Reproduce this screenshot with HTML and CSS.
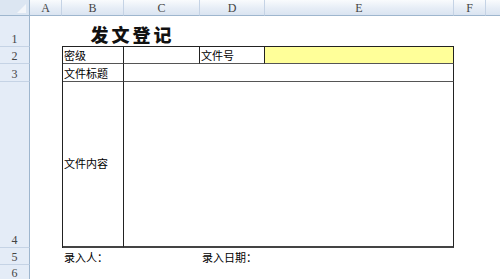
FILE: index.html
```html
<!DOCTYPE html>
<html>
<head>
<meta charset="utf-8">
<link rel="stylesheet" href="styles.css">
</head>
<body>
<div class="sheet">
  <div class="corner"><span class="tri"></span></div>
  <div class="ch cA">A</div>
  <div class="ch cB">B</div>
  <div class="ch cC">C</div>
  <div class="ch cD">D</div>
  <div class="ch cE">E</div>
  <div class="ch cF">F</div>
  <div class="ch cG"></div>

  <div class="rh r1">1</div>
  <div class="rh r2">2</div>
  <div class="rh r3">3</div>
  <div class="rh r4">4</div>
  <div class="rh r5">5</div>
  <div class="rh r6">6</div>

  <div class="title">发文登记</div>

  <div class="form">
    <div class="cell">密级</div>
    <div class="cell"></div>
    <div class="cell">文件号</div>
    <div class="cell yellow"></div>
    <div class="cell">文件标题</div>
    <div class="cell span3"></div>
    <div class="cell mid">文件内容</div>
    <div class="cell span3"></div>
  </div>

  <div class="foot f1">录入人：</div>
  <div class="foot f2">录入日期：</div>
</div>
</body>
</html>
```

FILE: styles.css
```css
html, body {
  margin: 0;
  padding: 0;
  background: #ffffff;
  overflow: hidden;
}

.sheet {
  width: 500px;
  height: 279px;
  display: grid;
  grid-template-columns: 30px 32px 62px 76px 65px 189px 32px 1fr;
  grid-template-rows: 16px 31px 17px 18px 166px 17px 17px 1fr;
  font-family: "Noto Sans CJK SC", sans-serif;
  background: #ffffff;
}

.corner {
  grid-row: 1;
  grid-column: 1;
  background: #dce6f2;
  border-right: 1px solid #9eb6ce;
  border-bottom: 1px solid #9eb6ce;
  position: relative;
}

.tri {
  position: absolute;
  right: 3px;
  bottom: 2px;
  width: 0;
  height: 0;
  border-left: 9px solid transparent;
  border-bottom: 9px solid #f3f6fa;
}

.ch {
  grid-row: 1;
  background: linear-gradient(#f9fbfd, #e6edf6 55%, #dae4f1);
  border-right: 1px solid #c5d3e5;
  border-bottom: 1px solid #9eb6ce;
  font-family: "Liberation Serif", serif;
  font-size: 12px;
  color: #444444;
  display: flex;
  justify-content: center;
  align-items: flex-end;
  line-height: 14px;
}

.cA { grid-column: 2; }
.cB { grid-column: 3; }
.cC { grid-column: 4; }
.cD { grid-column: 5; }
.cE { grid-column: 6; }
.cF { grid-column: 7; }
.cG { grid-column: 8; border-right: none; }

.rh {
  grid-column: 1;
  background: #e4ecf7;
  border-right: 1px solid #9eb6ce;
  border-bottom: 1px solid #c5d3e5;
  font-family: "Liberation Serif", serif;
  font-size: 12px;
  color: #444444;
  display: flex;
  justify-content: center;
  align-items: flex-end;
  line-height: 14px;
}

.r1 { grid-row: 2; }
.r2 { grid-row: 3; }
.r3 { grid-row: 4; }
.r4 { grid-row: 5; }
.r5 { grid-row: 6; }
.r6 { grid-row: 7 / 9; align-items: flex-start; padding-top: 1px; border-bottom: none; }

.title {
  grid-row: 2;
  grid-column: 3 / 5;
  display: flex;
  justify-content: center;
  align-items: flex-end;
  padding-bottom: 3px;
  padding-left: 3px;
  font-size: 18px;
  font-weight: 900;
  letter-spacing: 3px;
  color: #111111;
  line-height: 20px;
}

.form {
  grid-row: 3 / 6;
  grid-column: 3 / 7;
  display: grid;
  grid-template-columns: 61px 76px 65px 1fr;
  grid-template-rows: 17px 18px 1fr;
  border-top: 1px solid #222222;
  border-left: 1px solid #222222;
  box-sizing: border-box;
  margin-top: -1px;
}

.cell {
  border-right: 1px solid #222222;
  border-bottom: 1px solid #555555;
  font-size: 11px;
  line-height: 13px;
  color: #000000;
  display: flex;
  align-items: flex-end;
  padding-left: 1px;
  padding-bottom: 1px;
  white-space: nowrap;
}

.form .cell:nth-last-child(-n+2) {
  border-bottom: 2px solid #444444;
}

.yellow {
  background: #ffff99;
}

.span3 {
  grid-column: 2 / 5;
}

.mid {
  align-items: center;
}

.foot {
  grid-row: 6;
  font-size: 11px;
  line-height: 13px;
  color: #000000;
  display: flex;
  align-items: flex-end;
  padding-left: 2px;
  padding-bottom: 1px;
  white-space: nowrap;
}

.f1 { grid-column: 3; }
.f2 { grid-column: 5; }
```
